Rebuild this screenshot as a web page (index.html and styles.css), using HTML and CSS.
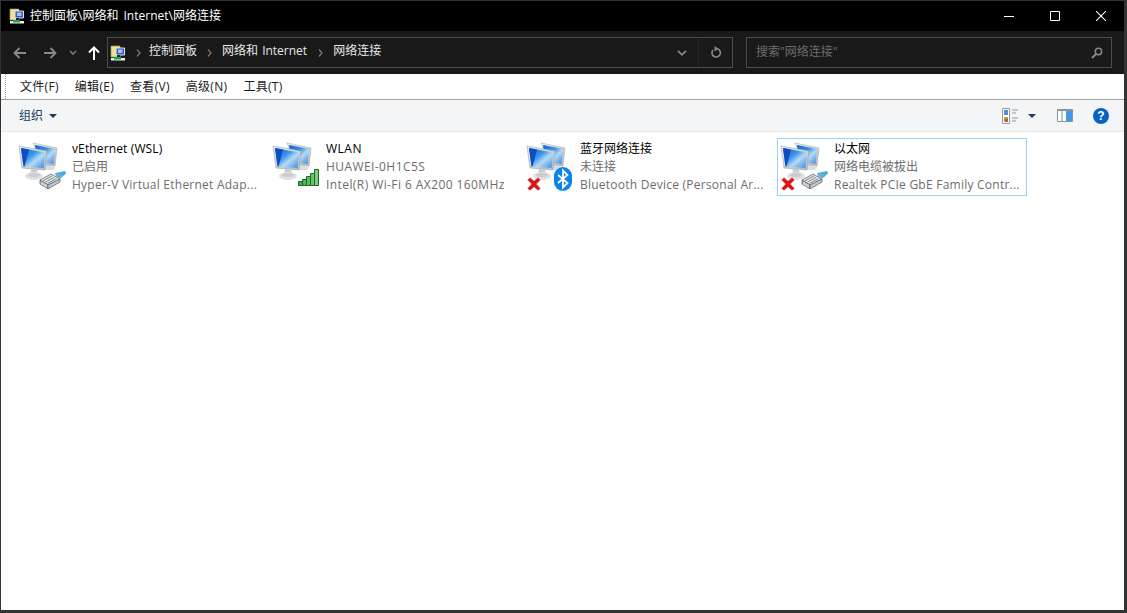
FILE: index.html
```html
<!DOCTYPE html>
<html lang="zh-CN">
<head>
<meta charset="utf-8">
<title>网络连接</title>
<link rel="stylesheet" href="styles.css">
</head>
<body>
<svg class="defs" width="0" height="0" aria-hidden="true">
  <defs>
    <linearGradient id="scr" x1="0" y1="0" x2="1" y2="1">
      <stop offset="0" stop-color="#1460d0"/>
      <stop offset=".4" stop-color="#3a94ea"/>
      <stop offset=".62" stop-color="#b4dbf7"/>
      <stop offset="1" stop-color="#3a86dc"/>
    </linearGradient>
    <linearGradient id="frm" x1="0" y1="0" x2="1" y2="1">
      <stop offset="0" stop-color="#f2f4f6"/>
      <stop offset="1" stop-color="#b0b8bd"/>
    </linearGradient>
    <linearGradient id="tail" x1="0" y1="1" x2="1" y2="0">
      <stop offset="0" stop-color="#8fb7c9"/>
      <stop offset="1" stop-color="#2fa6e0"/>
    </linearGradient>
    <symbol id="pcs" viewBox="0 0 41 40">
      <path d="M16 2 40 7 38 25 26 24Z" fill="url(#frm)" stroke="#a6aeb4" stroke-width=".6"/>
      <path d="M18 4 38 8 36.500 23 20 21Z" fill="url(#scr)"/>
      <ellipse cx="32" cy="27" rx="6" ry="2" fill="#d9dcde"/>
      <path d="M2 5 30 10 28 29 5 27Z" fill="url(#frm)" stroke="#9aa3aa" stroke-width=".6"/>
      <path d="M4 7 28 11.500 26.500 27 6.500 25.500Z" fill="url(#scr)"/>
      <path d="M4 7 12 8.500 7.500 25.600 6.500 25.500Z" fill="#0e4cc4"/>
      <path d="M14 28H20L20.500 32H13.500Z" fill="#c9cdd0"/>
      <ellipse cx="17" cy="35" rx="9" ry="4" fill="#dfe2e4"/>
      <ellipse cx="17" cy="34" rx="6" ry="2" fill="#cacdd0"/>
    </symbol>
    <symbol id="plug" viewBox="0 0 27 18">
      <path d="M1 9 12 3 21 8 9 14Z" fill="#e4e8ea" stroke="#5f686e" stroke-width=".8"/>
      <path d="M1 9 9 14 9 18 1 13Z" fill="#aab2b7" stroke="#5f686e" stroke-width=".8"/>
      <path d="M9 14 21 8 21 11 9 18Z" fill="#c3cacd" stroke="#5f686e" stroke-width=".8"/>
      <path d="M4 9.800 13 4.800M6.300 11.200 15.300 6.200M8.600 12.500 17.600 7.500" stroke="#6f787e" stroke-width=".9" fill="none"/>
      <path d="M3 11 3 14M5 12.200 5 15.500M7 13.400 7 16.500" stroke="#fff" stroke-width=".8"/>
      <path d="M16 2 26 0 27 2.500 21 8 17 5.500Z" fill="url(#tail)"/>
    </symbol>
    <symbol id="cross" viewBox="0 0 14 14">
      <path d="M.500 3 3 .500 7 4 11 .500 13.500 3 9.500 7 13.500 11.500 11 13.500 7 10 3 13.500 .500 11.500 4.500 7Z" fill="#d8141a" stroke="#f2a0a0" stroke-width=".5"/>
    </symbol>
    <symbol id="ctl" viewBox="0 0 16 16">
      <path d="M1 1H10V12H1Z" fill="#f2e18c" stroke="#a89a55" stroke-width=".7"/>
      <path d="M6 3H14.500V10H6Z" fill="#3c55c8" stroke="#dfe3ee" stroke-width="1"/>
      <path d="M8 4.500H12.500V8H8Z" fill="#a5c3ef"/>
      <path d="M7 10H10V12H7Z" fill="#222"/>
      <path d="M1 13H15V15.500H1Z" fill="#eee"/>
      <path d="M4 12H11V14.500H4Z" fill="#15a84c"/>
    </symbol>
  </defs>
</svg>
<div class="window">
  <header class="titlebar">
    <svg class="ctl" width="16" height="16"><use href="#ctl"/></svg>
    <span class="title">控制面板\网络和 Internet\网络连接</span>
    <div class="caption">
      <span class="capbtn"><svg width="10" height="10" viewBox="0 0 10 10"><path d="M0 5.500H10" stroke="#fff"/></svg></span>
      <span class="capbtn"><svg width="10" height="10" viewBox="0 0 10 10"><path d="M.5.500H9.500V9.500H.5Z" stroke="#fff" fill="none"/></svg></span>
      <span class="capbtn"><svg width="10" height="10" viewBox="0 0 10 10"><path d="M0 0 10 10M10 0 0 10" stroke="#fff" stroke-width="1.100"/></svg></span>
    </div>
  </header>

  <nav class="navbar">
    <div class="navbtns">
      <svg width="14" height="12" viewBox="0 0 14 12"><path d="M13 6H2M6.500 1 1.500 6 6.500 11" stroke="#8a8a8a" stroke-width="1.800" fill="none"/></svg>
      <svg class="fwd" width="14" height="12" viewBox="0 0 14 12"><path d="M1 6H12M7.500 1 12.500 6 7.500 11" stroke="#8a8a8a" stroke-width="1.800" fill="none"/></svg>
      <svg class="rec" width="8" height="6" viewBox="0 0 8 6"><path d="M1 1 4 4 7 1" stroke="#777" stroke-width="1.600" fill="none"/></svg>
      <svg class="up" width="12" height="14" viewBox="0 0 12 14"><path d="M6 14V2M1 6.500 6 1.500 11 6.500" stroke="#fff" stroke-width="2" fill="none"/></svg>
    </div>
    <div class="address">
      <svg class="ctl" width="16" height="16"><use href="#ctl"/></svg>
      <svg class="sep" width="5" height="8" viewBox="0 0 5 8"><path d="M1 0.500 4 4 1 7.500" stroke="#777" stroke-width="1.300" fill="none"/></svg>
      <span class="crumb">控制面板</span>
      <svg class="sep" width="5" height="8" viewBox="0 0 5 8"><path d="M1 0.500 4 4 1 7.500" stroke="#777" stroke-width="1.300" fill="none"/></svg>
      <span class="crumb">网络和 Internet</span>
      <svg class="sep" width="5" height="8" viewBox="0 0 5 8"><path d="M1 0.500 4 4 1 7.500" stroke="#777" stroke-width="1.300" fill="none"/></svg>
      <span class="crumb">网络连接</span>
      <span class="addr-drop"><svg width="10" height="6" viewBox="0 0 10 6"><path d="M1 .800 5 4.800 9 .800" stroke="#888" stroke-width="1.700" fill="none"/></svg></span>
      <span class="addr-refresh"><svg width="12" height="13" viewBox="0 0 12 13"><path d="M7.500 2.800A4.200 4.200 0 1 1 3 4" stroke="#888" stroke-width="1.600" fill="none"/><path d="M4.500 0 8.500 2.800 4.500 5.500Z" fill="#888"/></svg></span>
    </div>
    <div class="search">
      <span class="placeholder">搜索"网络连接"</span>
      <svg width="12" height="12" viewBox="0 0 12 12"><circle cx="7.500" cy="4.500" r="3.200" stroke="#888" stroke-width="1.500" fill="none"/><path d="M5 7 1 11" stroke="#888" stroke-width="2"/></svg>
    </div>
  </nav>

  <div class="menubar">
    <span class="grip"></span>
    <span class="menu">文件(F)</span>
    <span class="menu">编辑(E)</span>
    <span class="menu">查看(V)</span>
    <span class="menu">高级(N)</span>
    <span class="menu">工具(T)</span>
  </div>

  <div class="toolbar">
    <span class="organize">组织</span>
    <span class="caret"></span>
    <div class="tools">
      <svg class="viewicon" width="16" height="16" viewBox="0 0 16 16">
        <path d="M.5.500H7.500V15.500H.5Z" fill="#fff" stroke="#8e9aa5"/>
        <path d="M2 2H6V7H2Z" fill="#4d8fd0"/><path d="M2 9H6V14H2Z" fill="#a6a14a"/><path d="M3 11H6V14H3Z" fill="#c8553a"/>
        <path d="M10 2H16M10 5H14M10 10H16M10 13H14" stroke="#8e9aa5"/>
      </svg>
      <span class="caret"></span>
      <svg class="paneicon" width="16" height="13" viewBox="0 0 16 13">
        <path d="M.5.500H15.500V12.500H.5Z" fill="#fff" stroke="#8a929a"/>
        <path d="M.5 .500H15.500V2H.5Z" fill="#8a929a"/><path d="M5 1V12" stroke="#8a929a"/>
        <path d="M9 2H15V12H9Z" fill="#3d9be9"/>
      </svg>
      <span class="help">?</span>
    </div>
  </div>

  <main class="content">
    <div class="conn">
      <div class="icon">
        <svg class="pcs" width="41" height="40"><use href="#pcs"/></svg>
        <svg class="plug" width="27" height="18"><use href="#plug"/></svg>
      </div>
      <div class="info">
        <div class="name latin">vEthernet (WSL)</div>
        <div class="sub">已启用</div>
        <div class="sub wide">Hyper-V Virtual Ethernet Adap...</div>
      </div>
    </div>
    <div class="conn">
      <div class="icon">
        <svg class="pcs" width="41" height="40"><use href="#pcs"/></svg>
        <svg class="bars" width="21" height="17" viewBox="0 0 21 17">
          <path d="M.5 12.500H4.500V16.500H.5Z" fill="#4ca64c" stroke="#1c6b2a"/>
          <path d="M4.500 10.500H8.500V16.500H4.500Z" fill="#55b055" stroke="#1c6b2a"/>
          <path d="M8.500 7.500H12.500V16.500H8.500Z" fill="#5cb85c" stroke="#1c6b2a"/>
          <path d="M12.500 4.500H16.500V16.500H12.500Z" fill="#6cc06c" stroke="#1c6b2a"/>
          <path d="M16.500 .500H20.500V16.500H16.500Z" fill="#7ccb7c" stroke="#1c6b2a"/>
        </svg>
      </div>
      <div class="info">
        <div class="name latin-wide">WLAN</div>
        <div class="sub wider">HUAWEI-0H1C5S</div>
        <div class="sub wider">Intel(R) Wi-Fi 6 AX200 160MHz</div>
      </div>
    </div>
    <div class="conn">
      <div class="icon">
        <svg class="pcs" width="41" height="40"><use href="#pcs"/></svg>
        <svg class="cross" width="14" height="14"><use href="#cross"/></svg>
        <svg class="bt" width="18" height="24" viewBox="0 0 18 24">
          <rect width="18" height="24" rx="9" fill="#0a84e8"/>
          <path d="M4 8 13.500 16 9 20.500V3.500L13.500 8 4 16" stroke="#fff" stroke-width="1.800" fill="none"/>
        </svg>
      </div>
      <div class="info">
        <div class="name">蓝牙网络连接</div>
        <div class="sub">未连接</div>
        <div class="sub wide">Bluetooth Device (Personal Ar...</div>
      </div>
    </div>
    <div class="conn selected">
      <div class="icon">
        <svg class="pcs" width="41" height="40"><use href="#pcs"/></svg>
        <svg class="cross" width="14" height="14"><use href="#cross"/></svg>
        <svg class="plug" width="27" height="18"><use href="#plug"/></svg>
      </div>
      <div class="info">
        <div class="name">以太网</div>
        <div class="sub">网络电缆被拔出</div>
        <div class="sub wide">Realtek PCIe GbE Family Contr...</div>
      </div>
    </div>
  </main>
</div>
</body>
</html>
```
FILE: styles.css
```css
* { box-sizing: border-box; }
html, body { margin: 0; height: 100%; overflow: hidden; }
body {
  font-family: "Open Sans", "Noto Sans CJK SC", sans-serif;
  font-size: 12px;
  color: #111;
  background: #333;
}
.defs { position: absolute; }
svg { display: block; flex: none; }
.window {
  height: 100vh;
  display: flex;
  flex-direction: column;
  border-style: solid;
  border-color: #333;
  border-width: 1px 3px 3px 1px;
}
.titlebar {
  height: 30px;
  flex: none;
  background: #000;
  color: #fff;
  display: flex;
  align-items: center;
  padding-left: 8px;
}
.title { margin-left: 5px; padding-bottom: 2px; word-spacing: 2px; }
.caption { margin-left: auto; display: flex; }
.capbtn {
  width: 46px;
  height: 30px;
  display: flex;
  align-items: center;
  justify-content: center;
}
.navbar {
  height: 43px;
  flex: none;
  background: #191919;
  display: flex;
  align-items: center;
  padding-right: 12px;
}
.navbtns { width: 106px; display: flex; align-items: center; padding-left: 12px; flex: none; }
.fwd { margin-left: 16px; }
.rec { margin-left: 12px; }
.up { margin-left: 11px; }
.address, .search {
  height: 31px;
  border: 1px solid #4c4c4c;
  display: flex;
  align-items: center;
}
.address {
  width: 626px;
  flex: none;
  padding-left: 2px;
  color: #e8e8e8;
}
.sep { margin: 0 8px 0 10px; }
.address .sep:nth-of-type(3) { margin: 0 10px; }
.address .sep:nth-of-type(4) { margin: 0 10px 0 11px; }
.crumb { padding-bottom: 6px; word-spacing: 1px; }
.addr-drop { margin-left: auto; width: 32px; display: flex; justify-content: center; }
.addr-refresh {
  width: 34px;
  height: 100%;
  border-left: 1px solid #262626;
  display: flex;
  align-items: center;
  justify-content: center;
}
.search {
  margin-left: 13px;
  flex: 1;
  padding: 0 8px 0 9px;
  justify-content: space-between;
}
.placeholder { color: #6d6d6d; padding-bottom: 4px; }
.menubar {
  height: 26px;
  flex: none;
  background: #fff;
  border-bottom: 1px solid #a0a0a0;
  display: flex;
  align-items: center;
  padding-left: 4px;
  gap: 16px;
}
.grip {
  width: 1px;
  height: 100%;
  margin-right: -2px;
  border-left: 1px dotted #9a9a9a;
}
.menu { color: #1a1a1a; padding-bottom: 2px; letter-spacing: .3px; }
.toolbar {
  height: 32px;
  flex: none;
  background: #f4f5f7;
  border-bottom: 1px solid #e6e8ea;
  display: flex;
  align-items: center;
  padding-left: 18px;
  color: #1e395b;
}
.caret {
  width: 0;
  height: 0;
  border-style: solid;
  border-width: 4px 4px 0;
  border-color: #1e395b transparent transparent;
}
.organize { margin-right: 6px; padding-bottom: 2px; }
.tools { margin-left: auto; display: flex; align-items: center; padding-right: 15px; }
.tools .caret { margin-left: 10px; }
.paneicon { margin-left: 21px; }
.help {
  width: 16px;
  height: 16px;
  margin-left: 20px;
  border-radius: 50%;
  background: #0a63c4;
  color: #fff;
  font: bold 12px/16px "Liberation Sans", sans-serif;
  text-align: center;
}
.content {
  flex: 1;
  background: #fff;
  display: flex;
  align-items: flex-start;
  gap: 4px;
  padding: 6px 0 0 14px;
}
.conn {
  width: 250px;
  height: 58px;
  flex: none;
  border: 1px solid transparent;
  display: flex;
}
.conn.selected { border-color: #99d1ff; }
.icon { width: 56px; height: 56px; position: relative; flex: none; }
.pcs { position: absolute; left: 1px; top: 2px; }
.plug { position: absolute; left: 23px; top: 32px; }
.bars { position: absolute; left: 28px; top: 30px; }
.cross { position: absolute; left: 3px; top: 38px; }
.bt { position: absolute; left: 30px; top: 28px; }
.info { padding-top: 1px; }
.name, .sub { height: 18px; line-height: 18px; white-space: nowrap; }
.name { color: #000; }
.sub { color: #6d6d6d; }
.latin { letter-spacing: .13px; }
.latin-wide { letter-spacing: .5px; }
.wide { letter-spacing: .24px; }
.wider { letter-spacing: .42px; }
```
